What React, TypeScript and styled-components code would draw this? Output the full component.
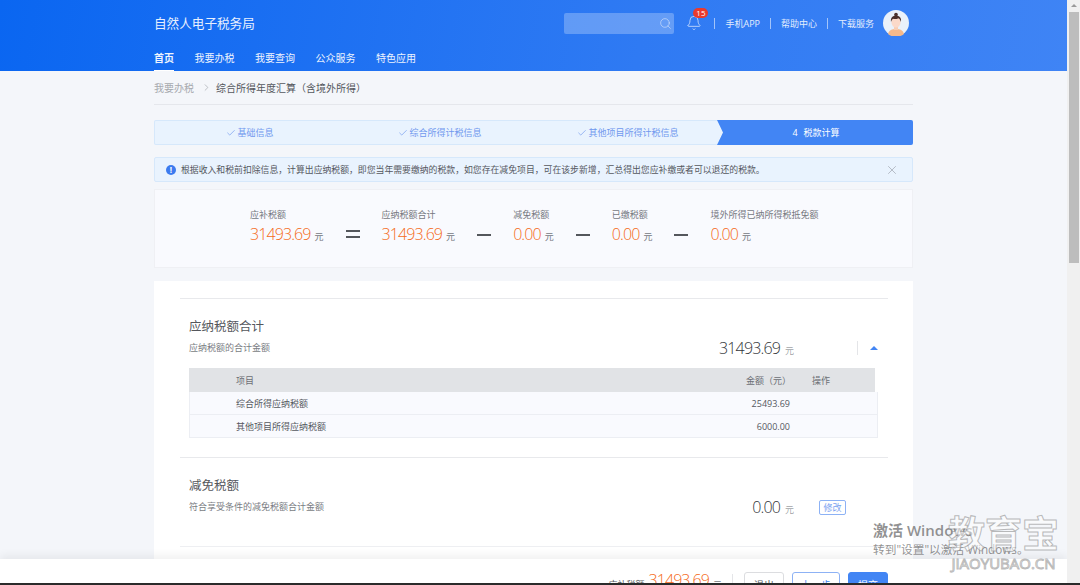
import React from 'react';
import styled, { createGlobalStyle } from 'styled-components';
import { Bell, Check, ChevronRight, Search, X } from 'lucide-react';

const GlobalStyle = createGlobalStyle`
  html, body {
    margin: 0;
    padding: 0;
    height: 100%;
    overflow: hidden;
    background: #f4f6fa;
    font-family: "Open Sans", "Noto Sans CJK SC", sans-serif;
    text-spacing-trim: space-all;
  }
  * {
    box-sizing: border-box;
  }
`;

const navItems = ['首页', '我要办税', '我要查询', '公众服务', '特色应用'];
const topLinks = ['手机APP', '帮助中心', '下载服务'];
const steps = ['基础信息', '综合所得计税信息', '其他项目所得计税信息'];
const alertText =
  '根据收入和税前扣除信息，计算出应纳税额，即您当年需要缴纳的税款，如您存在减免项目，可在该步新增，汇总得出您应补缴或者可以退还的税款。';

const summary = [
  { label: '应补税额', value: '31493.69', op: '=' },
  { label: '应纳税额合计', value: '31493.69', op: '-' },
  { label: '减免税额', value: '0.00', op: '-' },
  { label: '已缴税额', value: '0.00', op: '-' },
  { label: '境外所得已纳所得税抵免额', value: '0.00', op: '' },
];

const rows = [
  { name: '综合所得应纳税额', amount: '25493.69' },
  { name: '其他项目所得应纳税额', amount: '6000.00' },
];

const Avatar = () => (
  <svg width="26" height="26" viewBox="0 0 26 26">
    <circle cx="13" cy="13" r="13" fill="#eaf1fa" />
    <path d="M5 24c1-4 4-5 8-5s7 1 8 5a13 13 0 0 1-16 0z" fill="#f6b98a" />
    <rect x="11" y="15" width="4" height="5" fill="#f8cdb4" />
    <ellipse cx="13" cy="12" rx="4.6" ry="5.6" fill="#fbd9c9" />
    <path d="M8 12c-.6-4 1.6-6.4 5-6.4s5.600 2.400 5 6.400c-.6-2-1.400-3.400-2.800-3.800-1.600 1-4.400 1-5 .6-1 .6-1.800 1.800-2.200 3.200z" fill="#4a2f2a" />
    <circle cx="13" cy="4.600" r="1.800" fill="#4a2f2a" />
  </svg>
);

const App: React.FC = () => {
  return (
    <Screen>
      <GlobalStyle />
      <Window>
        <Page>
          <Header>
            <TopRow>
              <SiteTitle>自然人电子税务局</SiteTitle>
              <TopRight>
                <SearchBox>
                  <Search size={13} strokeWidth={1.2} color="#cfe0fb" />
                </SearchBox>
                <BellWrap>
                  <Bell size={16} strokeWidth={1.1} color="#e3edfd" />
                  <Badge>15</Badge>
                </BellWrap>
                <Links>
                  {topLinks.map((link) => (
                    <TopLink key={link}>{link}</TopLink>
                  ))}
                </Links>
                <Avatar />
              </TopRight>
            </TopRow>
            <Nav>
              {navItems.map((item, index) => (
                <NavItem key={item} $active={index === 0}>
                  {item}
                </NavItem>
              ))}
            </Nav>
          </Header>

          <Main>
            <Breadcrumb>
              <CrumbParent>我要办税</CrumbParent>
              <ChevronRight size={11} strokeWidth={1.2} color="#8f939a" />
              <CrumbCurrent>综合所得年度汇算（含境外所得）</CrumbCurrent>
            </Breadcrumb>

            <Steps>
              {steps.map((step) => (
                <Step key={step}>
                  <Check size={10} strokeWidth={1.6} />
                  {step}
                </Step>
              ))}
              <ActiveStep>
                <span>4</span>
                税款计算
              </ActiveStep>
            </Steps>

            <Alert>
              <AlertIcon>!</AlertIcon>
              <AlertText>{alertText}</AlertText>
              <X size={14} strokeWidth={1} color="#8f959e" />
            </Alert>

            <Summary>
              {summary.map((item) => (
                <React.Fragment key={item.label}>
                  <SummaryItem>
                    <SummaryLabel>{item.label}</SummaryLabel>
                    <div>
                      <SummaryValue>{item.value}</SummaryValue>
                      <Unit>元</Unit>
                    </div>
                  </SummaryItem>
                  {item.op && <Operator $double={item.op === '='} />}
                </React.Fragment>
              ))}
            </Summary>

            <Card>
              <Section>
                <SectionHead>
                  <SectionText>
                    <SectionTitle>应纳税额合计</SectionTitle>
                    <SectionSub>应纳税额的合计金额</SectionSub>
                  </SectionText>
                  <Amount>
                    31493.69<AmountUnit>元</AmountUnit>
                  </Amount>
                  <Actions>
                    <ActionDivider />
                    <Caret />
                  </Actions>
                </SectionHead>
                <Table>
                  <TableHead>
                    <span>项目</span>
                    <AmountCell>金额（元）</AmountCell>
                    <span>操作</span>
                  </TableHead>
                  {rows.map((row) => (
                    <TableRow key={row.name}>
                      <span>{row.name}</span>
                      <AmountCell>{row.amount}</AmountCell>
                      <span />
                    </TableRow>
                  ))}
                </Table>
              </Section>
              <Section $tall>
                <SectionHead>
                  <SectionText>
                    <SectionTitle>减免税额</SectionTitle>
                    <SectionSub>符合享受条件的减免税额合计金额</SectionSub>
                  </SectionText>
                  <Amount>
                    0.00<AmountUnit>元</AmountUnit>
                  </Amount>
                  <Actions>
                    <EditButton>修改</EditButton>
                  </Actions>
                </SectionHead>
              </Section>
            </Card>
          </Main>

          <Footer>
            <FooterLabel>应补税额</FooterLabel>
            <FooterValue>31493.69</FooterValue>
            <FooterUnit>元</FooterUnit>
            <FooterDivider />
            <FooterButton>退出</FooterButton>
            <FooterButton $variant="outline">上一步</FooterButton>
            <FooterButton $variant="primary">提交</FooterButton>
          </Footer>

          <Activation>
            <ActivationTitle>激活 Windows</ActivationTitle>
            <ActivationSub>转到"设置"以激活 Windows。</ActivationSub>
          </Activation>
          <Stamp>
            <StampTitle>教育宝</StampTitle>
            <StampUrl>JIAOYUBAO.CN</StampUrl>
          </Stamp>
        </Page>
        <Scrollbar>
          <ScrollArrow />
          <ScrollThumb />
        </Scrollbar>
      </Window>
      <Taskbar />
    </Screen>
  );
};

export default App;

const Screen = styled.div`
  display: flex;
  flex-direction: column;
  width: 1080px;
  height: 585px;
  overflow: hidden;
`;

const Window = styled.div`
  display: flex;
  flex: 1;
  min-height: 0;
`;

const Page = styled.div`
  position: relative;
  flex: 1;
  min-width: 0;
  overflow: hidden;
  background: #f4f6fa;
`;

const Taskbar = styled.div`
  height: 2px;
  background: #2b2b2b;
`;

const Scrollbar = styled.div`
  display: flex;
  flex-direction: column;
  align-items: center;
  width: 13px;
  padding-top: 4px;
  background: #f0f0f0;
`;

const ScrollArrow = styled.div`
  width: 0;
  height: 0;
  border-left: 3px solid transparent;
  border-right: 3px solid transparent;
  border-bottom: 3px solid #9a9a9a;
`;

const ScrollThumb = styled.div`
  width: 10px;
  height: 251px;
  margin-top: 5px;
  background: #bdbdbd;
`;

const Header = styled.header`
  height: 71px;
  padding: 0 158px 0 154px;
  background: linear-gradient(100deg, #0a66f1 0%, #2f7af3 60%, #3f84f5 100%);
  color: #fff;
`;

const TopRow = styled.div`
  display: flex;
  align-items: center;
  justify-content: space-between;
  height: 46px;
`;

const SiteTitle = styled.div`
  margin-top: -2px;
  font-size: 12.600px;
  color: #e8f0fe;
`;

const TopRight = styled.div`
  display: flex;
  align-items: center;
`;

const SearchBox = styled.div`
  display: flex;
  align-items: center;
  justify-content: flex-end;
  width: 110px;
  height: 21px;
  padding-right: 2px;
  margin-right: 12px;
  border-radius: 2px;
  background: rgba(255, 255, 255, 0.26);
`;

const BellWrap = styled.div`
  position: relative;
  display: flex;
  width: 16px;
  height: 16px;
  margin-right: 12px;
`;

const Badge = styled.span`
  position: absolute;
  top: -7px;
  left: 7px;
  width: 15px;
  height: 10px;
  border-radius: 5px;
  background: #ea3a2d;
  color: #fff;
  font-size: 8px;
  line-height: 10px;
  text-align: center;
`;

const Links = styled.div`
  display: flex;
  align-items: center;
  margin-right: -1px;
`;

const TopLink = styled.span`
  padding: 0 10px;
  border-left: 1px solid rgba(255, 255, 255, 0.55);
  font-size: 9px;
  line-height: 11px;
  color: #e3edfd;
`;

const Nav = styled.nav`
  display: flex;
  gap: 20.500px;
  height: 25px;
`;

const NavItem = styled.div<{ $active?: boolean }>`
  height: 25px;
  padding-top: 5px;
  border-bottom: 1px solid ${(p) => (p.$active ? '#fff' : 'transparent')};
  font-size: 10px;
  line-height: 14px;
  font-weight: ${(p) => (p.$active ? 700 : 400)};
  color: #eef4fe;
`;

const Main = styled.main`
  width: 759px;
  margin-left: 154px;
`;

const Breadcrumb = styled.div`
  display: flex;
  align-items: center;
  gap: 5px;
  height: 34px;
  padding-bottom: 1px;
  border-bottom: 1px solid #e5e7ec;
  font-size: 10px;
`;

const CrumbParent = styled.span`
  margin-right: 2px;
  color: #a6a9ae;
`;

const CrumbCurrent = styled.span`
  margin-left: -1px;
  color: #55585e;
`;

const Steps = styled.div`
  display: grid;
  grid-template-columns: 192px 188px 183px 1fr;
  height: 25px;
  margin-top: 15px;
  border-radius: 2px;
  background: #e9f3fe;
  box-shadow: inset 0 0 0 1px #d6e8fb;
`;

const Step = styled.div`
  display: flex;
  align-items: center;
  justify-content: center;
  gap: 1px;
  font-size: 9px;
  color: #6f98ee;

  &:nth-child(3) {
    padding-left: 5px;
  }
`;

const ActiveStep = styled.div`
  display: flex;
  align-items: center;
  justify-content: center;
  gap: 6px;
  padding-left: 2px;
  font-size: 9px;
  color: #fff;
  background: #4285f4;
  border-radius: 0 2px 2px 0;
  clip-path: polygon(0 0, 100% 0, 100% 100%, 0 100%, 6px 50%);
`;

const Alert = styled.div`
  display: flex;
  align-items: center;
  height: 25px;
  margin-top: 12px;
  padding: 0 13px 0 11px;
  border: 1px solid #d6e8fb;
  border-radius: 2px;
  background: #e9f3fe;
`;

const AlertIcon = styled.span`
  width: 10px;
  height: 10px;
  margin-right: 5px;
  border-radius: 50%;
  background: #3c7bef;
  color: #fff;
  font-size: 8px;
  font-weight: 700;
  line-height: 10px;
  text-align: center;
`;

const AlertText = styled.span`
  flex: 1;
  font-size: 8.850px;
  color: #55585e;
  white-space: nowrap;
`;

const Summary = styled.div`
  display: flex;
  gap: 22px;
  height: 79px;
  margin-top: 7px;
  padding: 18px 0 0 95px;
  border: 1px solid #eff0f4;
  background: #f9fafe;
`;

const SummaryItem = styled.div`
  display: flex;
  flex-direction: column;
  gap: 2px;
`;

const SummaryLabel = styled.div`
  font-size: 9px;
  line-height: 13px;
  color: #75787e;
  white-space: nowrap;
`;

const SummaryValue = styled.span`
  font-size: 16px;
  line-height: 22px;
  font-weight: 300;
  letter-spacing: -0.9px;
  color: #f56a20;
`;

const Unit = styled.span`
  margin-left: 4px;
  font-size: 9px;
  color: #75787e;
`;

const Operator = styled.div<{ $double?: boolean }>`
  width: 14px;
  height: ${(p) => (p.$double ? '8px' : '2px')};
  margin-top: ${(p) => (p.$double ? '22px' : '26px')};
  border-top: 2px solid #54575c;
  border-bottom: ${(p) => (p.$double ? '2px solid #54575c' : 'none')};
`;

const Card = styled.div`
  height: 300px;
  margin-top: 13px;
  padding: 17px 25px 0 26px;
  background: #fff;
`;

const Section = styled.section<{ $tall?: boolean }>`
  padding: 18px 10px ${(p) => (p.$tall ? '33px' : '19px')} 9px;
  border-top: 1px solid #e8e9ec;
  border-bottom: ${(p) => (p.$tall ? '1px solid #eeeff2' : 'none')};
`;

const SectionHead = styled.div`
  display: flex;
  align-items: flex-end;
`;

const SectionText = styled.div`
  flex: 1;
  padding-top: 1px;
`;

const SectionTitle = styled.div`
  font-size: 12.500px;
  line-height: 18px;
  color: #54575c;
`;

const SectionSub = styled.div`
  margin-top: 6px;
  font-size: 9px;
  line-height: 12px;
  color: #7a7d83;
`;

const Amount = styled.div`
  margin-bottom: -5px;
  font-size: 16px;
  line-height: 16px;
  font-weight: 300;
  letter-spacing: -0.85px;
  color: #33363a;
`;

const AmountUnit = styled.span`
  margin-left: 5px;
  font-size: 9px;
  letter-spacing: 0;
  color: #75787e;
`;

const Actions = styled.div`
  display: flex;
  align-items: center;
  justify-content: flex-end;
  gap: 12px;
  width: 84px;
  height: 16px;
  margin-bottom: -2px;
`;

const ActionDivider = styled.div`
  width: 1px;
  height: 14px;
  background: #e4e5e8;
`;

const Caret = styled.div`
  width: 0;
  height: 0;
  border-left: 4px solid transparent;
  border-right: 4px solid transparent;
  border-bottom: 4px solid #4285f4;
`;

const EditButton = styled.button`
  width: 27px;
  height: 15px;
  margin-right: 32px;
  padding: 0;
  border: 1px solid #8db2f5;
  border-radius: 2px;
  background: #fff;
  color: #7ba2f0;
  font-family: inherit;
  font-size: 9px;
  line-height: 13px;
`;

const Table = styled.div`
  margin-top: 14px;
  font-size: 9px;
  color: #55585e;
`;

const TableHead = styled.div`
  display: grid;
  grid-template-columns: 1fr 120px 84px;
  align-items: center;
  height: 24px;
  width: 686px;
  padding-left: 47px;
  background: #e1e3e6;
  color: #6c6f75;

  & > span:last-child {
    padding-left: 21px;
  }
`;

const TableRow = styled.div`
  display: grid;
  grid-template-columns: 1fr 120px 84px;
  align-items: center;
  height: 23px;
  padding: 0 3px 0 46px;
  background: #f9fafe;
  border: 1px solid #eceef3;
  border-top: none;
`;

const AmountCell = styled.span`
  text-align: right;
`;

const Footer = styled.footer`
  position: absolute;
  left: 0;
  right: 0;
  bottom: 0;
  display: flex;
  align-items: flex-start;
  justify-content: flex-end;
  height: 24px;
  padding: 13px 179px 0 0;
  overflow: hidden;
  background: #fff;
  box-shadow: 0 -4px 8px rgba(0, 0, 0, 0.06);
`;

const FooterLabel = styled.span`
  margin-top: 6px;
  font-size: 9px;
  color: #55585e;
`;

const FooterValue = styled.span`
  margin: -3px 0 0 4px;
  font-size: 16px;
  line-height: 22px;
  font-weight: 300;
  letter-spacing: -0.9px;
  color: #f56a20;
`;

const FooterUnit = styled.span`
  margin: 6px 0 0 4px;
  font-size: 9px;
  color: #75787e;
`;

const FooterDivider = styled.div`
  width: 1px;
  height: 12px;
  margin: 2px 11px 0 10px;
  background: #e4e5e8;
`;

const FooterButton = styled.button<{ $variant?: 'outline' | 'primary' }>`
  width: ${(p) => (p.$variant === 'outline' ? '48px' : '40px')};
  height: 24px;
  margin-left: ${(p) => (p.$variant ? '8px' : '0')};
  padding: 0;
  border: 1px solid ${(p) =>
    p.$variant === 'primary' ? '#4285f4' : p.$variant === 'outline' ? '#8db2f5' : '#dcdde0'};
  border-radius: 3px;
  background: ${(p) => (p.$variant === 'primary' ? '#4285f4' : '#fff')};
  color: ${(p) =>
    p.$variant === 'primary' ? '#fff' : p.$variant === 'outline' ? '#4285f4' : '#55585e'};
  font-family: inherit;
  font-size: 10px;
`;

const Activation = styled.div`
  position: absolute;
  left: 873px;
  top: 520px;
  white-space: nowrap;
  color: rgba(110, 110, 110, 0.75);
`;

const ActivationTitle = styled.div`
  font-size: 15px;
  line-height: 20px;
  font-weight: 600;
`;

const ActivationSub = styled.div`
  margin-top: 1px;
  font-size: 11.700px;
  line-height: 16px;
`;

const Stamp = styled.div`
  position: absolute;
  left: 946px;
  top: 512px;
  width: 115px;
  text-align: center;
  color: rgba(255, 255, 255, 0.55);
  -webkit-text-stroke: 1px rgba(120, 120, 120, 0.5);
`;

const StampTitle = styled.div`
  font-size: 37px;
  line-height: 44px;
  font-weight: 700;
  white-space: nowrap;
`;

const StampUrl = styled.div`
  font-size: 15px;
  line-height: 14px;
  white-space: nowrap;
`;
